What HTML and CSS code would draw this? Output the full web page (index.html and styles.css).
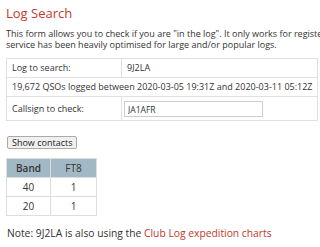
FILE: index.html
```html
<!DOCTYPE html>
<html>
<head>
    <link rel="stylesheet" href="styles.css">
</head>
<body>
<div class="page">
    <h1 class="title">Log Search</h1>
    <p class="intro">This form allows you to check if you are "in the log". It only works for registered logs, and the
        service has been heavily optimised for large and/or popular logs.</p>

    <table class="search-table">
        <tr>
            <td class="label">Log to search:</td>
            <td>9J2LA</td>
        </tr>
        <tr>
            <td colspan="2">19,672 QSOs logged between 2020-03-05 19:31Z and 2020-03-11 05:12Z</td>
        </tr>
        <tr>
            <td class="label">Callsign to check:</td>
            <td><input type="text" class="call-input" value="JA1AFR"/></td>
        </tr>
    </table>

    <button class="show-btn">Show contacts</button>

    <table class="band-table">
        <thead>
        <tr>
            <th>Band</th>
            <th>FT8</th>
        </tr>
        </thead>
        <tbody>
        <tr>
            <td>40</td>
            <td>1</td>
        </tr>
        <tr>
            <td>20</td>
            <td>1</td>
        </tr>
        </tbody>
    </table>

    <p class="note">Note: 9J2LA is also using the <a href="#" class="red-link">Club Log expedition charts</a></p>
</div>
</body>
</html>
```

FILE: styles.css
```css
html, body {
    overflow: hidden;
}

body {
    margin: 0;
    padding: 0 6px;
    font-family: "Open Sans", sans-serif;
    font-size: 9px;
    color: #333;
    background: #fff;
}

.page {
    width: 400px;
}

.title {
    margin: 4px 0 0;
    font-size: 13px;
    font-weight: normal;
    line-height: 18px;
    color: #c0392b;
}

.intro {
    margin: 6px 0 8px;
    line-height: 11px;
}

.search-table {
    border-collapse: collapse;
    border: 1px solid #e0e0e0;
}

.search-table td {
    border: 1px solid #e0e0e0;
    padding: 3px 4px 3px 5px;
    line-height: 12px;
}

.search-table .label {
    width: 105px;
}

.call-input {
    display: block;
    width: 139px;
    height: 16px;
    box-sizing: border-box;
    margin: 1px 0 0 -3px;
    padding: 0 3px;
    border: 1px solid #ccc;
    font-family: "Open Sans", sans-serif;
    font-size: 8.5px;
    color: #333;
}

.show-btn {
    display: block;
    margin: 15px 0 0 1px;
    padding: 0 4px;
    height: 13px;
    font-family: "Open Sans", sans-serif;
    font-size: 9px;
    line-height: 11px;
    color: #222;
    background: #f0f0f0;
    border: 1px solid #aaa;
    border-radius: 2px;
}

.band-table {
    margin-top: 9px;
    border-collapse: collapse;
    border: 1px solid #ddd;
    font-size: 10px;
}

.band-table th,
.band-table td {
    border: 1px solid #ddd;
    height: 18px;
    padding: 0;
    text-align: center;
    line-height: 12px;
}

.band-table th {
    width: 43px;
    background: #a3b8c5;
    font-weight: 600;
    color: #333;
}

.band-table th + th {
    width: 45px;
    font-weight: normal;
}

.note {
    margin: 10px 0 0 1px;
    font-size: 10.3px;
}

.red-link {
    color: #c0392b;
    text-decoration: none;
}
```
